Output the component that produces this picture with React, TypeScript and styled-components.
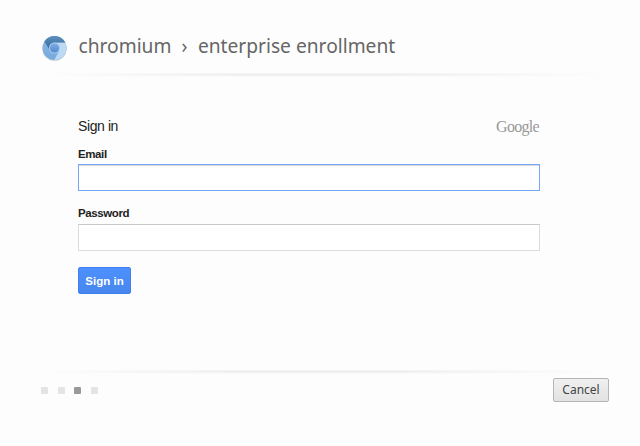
import React from 'react';
import styled, { createGlobalStyle } from 'styled-components';

const GlobalStyle = createGlobalStyle`
  * { box-sizing: border-box; }
  html, body { margin: 0; background: #fdfdfd; }
`;

const Screen = styled.main`
  display: flex;
  flex-direction: column;
  width: 640px;
  height: 446px;
  overflow: hidden;
  background: #fdfdfd;
  font-family: 'Liberation Sans', Arial, sans-serif;
`;

const Header = styled.header`
  display: flex;
  align-items: center;
  height: 73px;
  padding: 22px 0 0 41px;
`;

const Title = styled.h1`
  display: flex;
  margin: 0 0 3px 10.5px;
  font: 400 19.2px/28px 'Noto Sans', sans-serif;
  color: #666;
  white-space: pre;
`;

const Chevron = styled.span`
  width: 26.5px;
  padding-left: 10px;
`;

const Divider = styled.div`
  height: 4px;
  margin: 0 31px 0 41px;
  background:
    linear-gradient(90deg, #fdfdfd, rgba(253, 253, 253, 0) 36%, rgba(253, 253, 253, 0) 60%, #fdfdfd),
    linear-gradient(#f3f3f3 1px, #ebebeb 1px, #f1f1f1 60%, #fdfdfd);
`;

const Form = styled.form`
  display: flex;
  flex-direction: column;
  align-items: flex-start;
  width: 462px;
  height: 293px;
  margin-left: 78px;
  padding-top: 39px;
`;

const FormHeader = styled.div`
  display: flex;
  justify-content: space-between;
  width: 100%;
  height: 31px;
`;

const Heading = styled.h2`
  margin: 0;
  font-size: 14px;
  font-weight: 400;
  line-height: 20px;
  letter-spacing: -0.4px;
  color: #222;
`;

const Wordmark = styled.span`
  padding-right: 1px;
  font: 400 16px/21px 'Liberation Serif', serif;
  letter-spacing: -0.7px;
  color: #999;
`;

const Label = styled.label`
  height: 17px;
  font-size: 11.5px;
  font-weight: 700;
  line-height: 14px;
  letter-spacing: -0.4px;
  color: #222;
`;

const Field = styled.input<{ $active?: boolean }>`
  appearance: none;
  width: 462px;
  height: 27px;
  margin: 0 0 15px;
  padding: 0 8px;
  border-style: solid;
  border-width: 1px;
  border-color: ${(p) => (p.$active ? '#74a7f8' : '#c8c8c8 #dcdcdc #dcdcdc')};
  background: ${(p) => (p.$active ? 'linear-gradient(#d5d5da 1px, #fff 1px)' : '#fff')};
  outline: none;

  & + label {
    height: 18px;
  }
`;

const SubmitButton = styled.button`
  width: 53px;
  height: 27px;
  margin-top: 1px;
  padding: 0;
  border: 1px solid #3f80ee;
  border-radius: 2px;
  background: linear-gradient(#4d90fe, #4787ed);
  color: #fff;
  font: 700 11.5px/26px 'Liberation Sans', Arial, sans-serif;
`;

const Footer = styled.footer`
  display: flex;
  justify-content: space-between;
  padding: 4px 31px 0 41px;
`;

const Steps = styled.div`
  display: flex;
  gap: 9.7px;
  padding-top: 8.5px;
`;

const Step = styled.span<{ $current?: boolean }>`
  width: 7px;
  height: 7px;
  border-radius: 1px;
  background: ${(p) => (p.$current ? '#999' : '#e4e4e4')};
`;

const CancelButton = styled.button`
  width: 56px;
  height: 24px;
  padding: 0;
  border: 1px solid #b5b5b5;
  border-radius: 2px;
  background: linear-gradient(#f0f0f0, #e2e2e2);
  color: #444;
  font: 400 12px/22px 'Noto Sans', sans-serif;
`;

const Logo = () => (
  <svg width="27" height="28" viewBox="0 0 27 28" aria-label="Chromium">
    <defs>
      <linearGradient id="left" x1="0" y1="0" x2="0" y2="1">
        <stop offset="0" stopColor="#8db9e5" />
        <stop offset="1" stopColor="#75a9dc" />
      </linearGradient>
      <linearGradient id="top" x1="0" y1="0" x2="0" y2="1">
        <stop offset="0" stopColor="#5c8fbd" />
        <stop offset="1" stopColor="#35699a" />
      </linearGradient>
      <linearGradient id="core" x1="0" y1="0" x2="0" y2="1">
        <stop offset="0" stopColor="#80aee5" />
        <stop offset="1" stopColor="#5588cc" />
      </linearGradient>
    </defs>
    <circle cx="13.5" cy="14.9" r="12.2" fill="#d5d9de" />
    <circle cx="13.5" cy="14" r="12" fill="url(#left)" />
    <path d="M13.5 8.5H24.2A12 12 0 0 1 13.2 26L18.3 16.8Z" fill="#bddaf4" />
    <path d="M3.4 7.5A12 12 0 0 1 24.2 8.6H13.5A5.5 5.5 0 0 0 8.4 15.5Z" fill="url(#top)" />
    <circle cx="13.5" cy="14" r="5.5" fill="#a9cbee" />
    <circle cx="13.5" cy="14" r="4.6" fill="url(#core)" />
  </svg>
);

export default function App() {
  return (
    <>
      <GlobalStyle />
      <Screen>
        <Header>
          <Logo />
          <Title>
            <span>chromium</span>
            <Chevron>›</Chevron>
            <span>enterprise enrollment</span>
          </Title>
        </Header>
        <Divider />
        <Form onSubmit={(e) => e.preventDefault()}>
          <FormHeader>
            <Heading>Sign in</Heading>
            <Wordmark>Google</Wordmark>
          </FormHeader>
          <Label htmlFor="email">Email</Label>
          <Field id="email" type="email" $active />
          <Label htmlFor="password">Password</Label>
          <Field id="password" type="password" />
          <SubmitButton type="submit">Sign in</SubmitButton>
        </Form>
        <Divider />
        <Footer>
          <Steps>
            <Step />
            <Step />
            <Step $current />
            <Step />
          </Steps>
          <CancelButton type="button">Cancel</CancelButton>
        </Footer>
      </Screen>
    </>
  );
}
